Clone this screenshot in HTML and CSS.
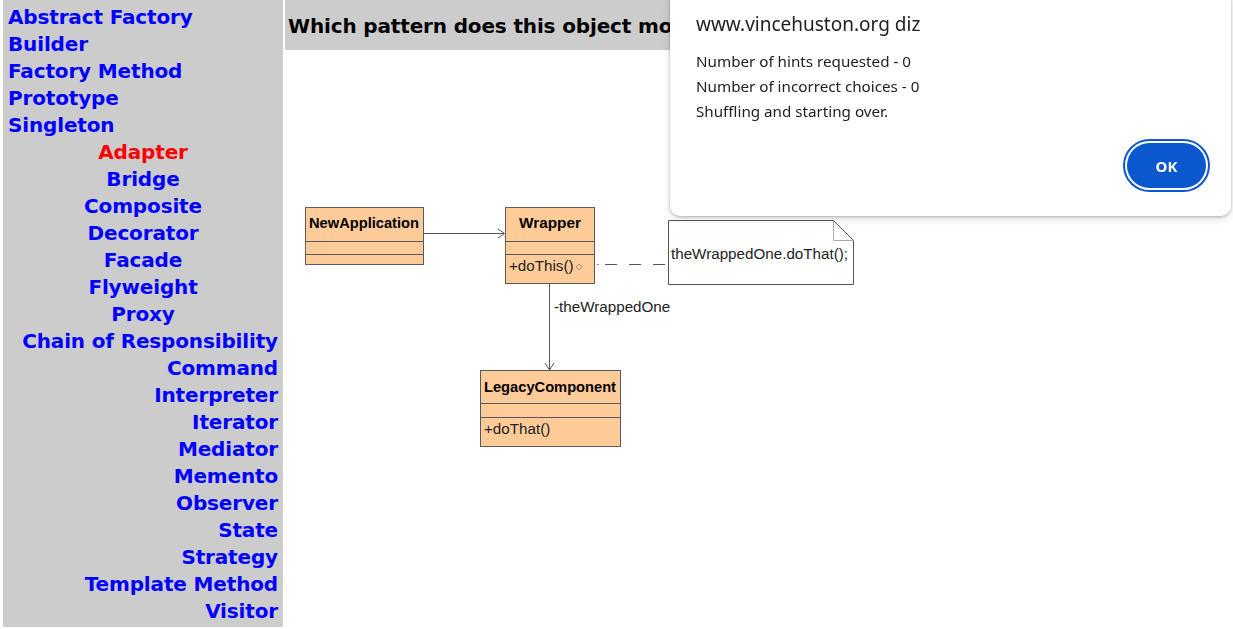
FILE: index.html
```html
<!DOCTYPE html>
<html>
<head>
    <meta charset="utf-8">
    <title>Design Patterns Quiz</title>
    <link rel="stylesheet" href="styles.css">
</head>
<body>
    <div class="page">
        <nav class="patterns">
            <div class="group -left">
                <a href="#">Abstract Factory</a>
                <a href="#">Builder</a>
                <a href="#">Factory Method</a>
                <a href="#">Prototype</a>
                <a href="#">Singleton</a>
            </div>
            <div class="group -center">
                <a href="#" class="-current">Adapter</a>
                <a href="#">Bridge</a>
                <a href="#">Composite</a>
                <a href="#">Decorator</a>
                <a href="#">Facade</a>
                <a href="#">Flyweight</a>
                <a href="#">Proxy</a>
            </div>
            <div class="group -right">
                <a href="#">Chain of Responsibility</a>
                <a href="#">Command</a>
                <a href="#">Interpreter</a>
                <a href="#">Iterator</a>
                <a href="#">Mediator</a>
                <a href="#">Memento</a>
                <a href="#">Observer</a>
                <a href="#">State</a>
                <a href="#">Strategy</a>
                <a href="#">Template Method</a>
                <a href="#">Visitor</a>
            </div>
        </nav>

        <main class="quiz">
            <h1 class="question">Which pattern does this object model describe?</h1>

            <svg class="diagram" width="620" height="410" viewBox="0 0 620 410">
                <g class="box">
                    <rect x="20.5" y="157.5" width="118" height="57" />
                    <line x1="20.5" y1="191.5" x2="138.5" y2="191.5" />
                    <line x1="20.5" y1="204.5" x2="138.5" y2="204.5" />
                    <text class="title" x="79" y="178" textLength="110" lengthAdjust="spacingAndGlyphs">NewApplication</text>
                </g>

                <g class="box">
                    <rect x="220.5" y="157.5" width="89" height="76" />
                    <line x1="220.5" y1="191.5" x2="309.5" y2="191.5" />
                    <line x1="220.5" y1="204.5" x2="309.5" y2="204.5" />
                    <text class="title" x="265" y="178" textLength="62" lengthAdjust="spacingAndGlyphs">Wrapper</text>
                    <text class="member" x="224" y="221">+doThis()</text>
                    <path class="thin" d="M294 214 L297 217 L294 220 L291 217 Z" />
                </g>

                <g class="box">
                    <rect x="195.5" y="320.5" width="140" height="76" />
                    <line x1="195.5" y1="353.5" x2="335.5" y2="353.5" />
                    <line x1="195.5" y1="367.5" x2="335.5" y2="367.5" />
                    <text class="title" x="265" y="342" textLength="132" lengthAdjust="spacingAndGlyphs">LegacyComponent</text>
                    <text class="member" x="199" y="384">+doThat()</text>
                </g>

                <g class="link">
                    <line x1="138.5" y1="183.5" x2="219" y2="183.5" />
                    <polyline points="213,179 219.5,183.5 213,188" />
                    <line x1="264.5" y1="233.5" x2="264.5" y2="320" />
                    <polyline points="260,313 264.5,320 269,313" />
                    <line class="dot" x1="312" y1="214.5" x2="314" y2="214.5" />
                    <line class="dashed" x1="320" y1="214.5" x2="383" y2="214.5" />
                </g>
                <text class="member" x="269" y="262">-theWrappedOne</text>

                <g class="note">
                    <path d="M383.5 170.5 H548.5 L568.5 190.5 V234.5 H383.5 Z" />
                    <polyline class="fold" points="548.5,170.5 548.5,190.5 568.5,190.5" />
                    <text class="member" x="386" y="209">theWrappedOne.doThat();</text>
                </g>
            </svg>
        </main>
    </div>

    <div class="alert" role="alertdialog">
        <h2 class="alert-title">www.vincehuston.org diz</h2>
        <p class="alert-body">
            Number of hints requested - 0<br>
            Number of incorrect choices - 0<br>
            Shuffling and starting over.
        </p>
        <div class="alert-actions">
            <button class="ok-button">OK</button>
        </div>
    </div>
</body>
</html>
```

FILE: styles.css
```css
* { box-sizing: border-box; margin: 0; }

body {
    margin: 0;
    background: #fff;
    font-family: "DejaVu Sans", Verdana, sans-serif;
}

.page {
    display: flex;
    gap: 2px;
    padding-left: 3px;
}

.patterns {
    width: 280px;
    flex: none;
    background: #ccc;
    padding: 4px 5px 2px;
    font-size: 20px;
    font-weight: bold;
    line-height: 27px;
    letter-spacing: -.15px;
}

.patterns a {
    display: block;
    color: #00f;
    text-decoration: none;
}

.patterns a.-current {
    color: #f00;
}

.group.-left { text-align: left; }
.group.-center { text-align: center; }
.group.-right { text-align: right; }

.quiz {
    flex: 1;
    min-width: 0;
}

.question {
    max-width: 945px;
    height: 50px;
    background: #ccc;
    padding-left: 3px;
    font-size: 20px;
    line-height: 52px;
    letter-spacing: -.15px;
    color: #000;
    white-space: nowrap;
    overflow: hidden;
}

.diagram {
    display: block;
    font-family: "Liberation Sans", Arial, sans-serif;
}

.box rect {
    fill: #ffcc99;
    stroke: #5a5a5a;
}

.box line {
    stroke: #5a5a5a;
}

.title {
    font-size: 14px;
    font-weight: bold;
    text-anchor: middle;
    fill: #000;
}

.member {
    font-size: 15.2px;
    fill: #222;
}

.thin {
    fill: none;
    stroke: #888;
    stroke-width: .8;
}

.link line,
.link polyline {
    fill: none;
    stroke: #555;
}

.link .dot {
    stroke: #999;
}

.link .dashed {
    stroke-dasharray: 12 12;
}

.note path {
    fill: #fff;
    stroke: #555;
}

.note .fold {
    fill: none;
    stroke: #aaa;
}

.alert {
    position: fixed;
    top: -10px;
    left: 670px;
    width: 561px;
    height: 226px;
    padding: 22px 21px 0 26px;
    background: #fff;
    border-radius: 10px;
    box-shadow: 0 1px 3px rgba(0, 0, 0, .25), 0 3px 8px rgba(0, 0, 0, .12);
    font-family: "Noto Sans", "Open Sans", sans-serif;
    color: #202124;
}

.alert-title {
    font-size: 19px;
    font-weight: normal;
    line-height: 24px;
}

.alert-body {
    margin-top: 13px;
    font-size: 15.2px;
    line-height: 25px;
}

.alert-actions {
    display: flex;
    justify-content: flex-end;
    margin-top: 19px;
    padding-right: 4px;
}

.ok-button {
    width: 79px;
    height: 45px;
    border: none;
    border-radius: 23px;
    background: #0b57d0;
    color: #fff;
    font-family: inherit;
    font-size: 15px;
    font-weight: bold;
    box-shadow: 0 0 0 2px #fff, 0 0 0 4px #0b57d0;
    cursor: pointer;
}
```
